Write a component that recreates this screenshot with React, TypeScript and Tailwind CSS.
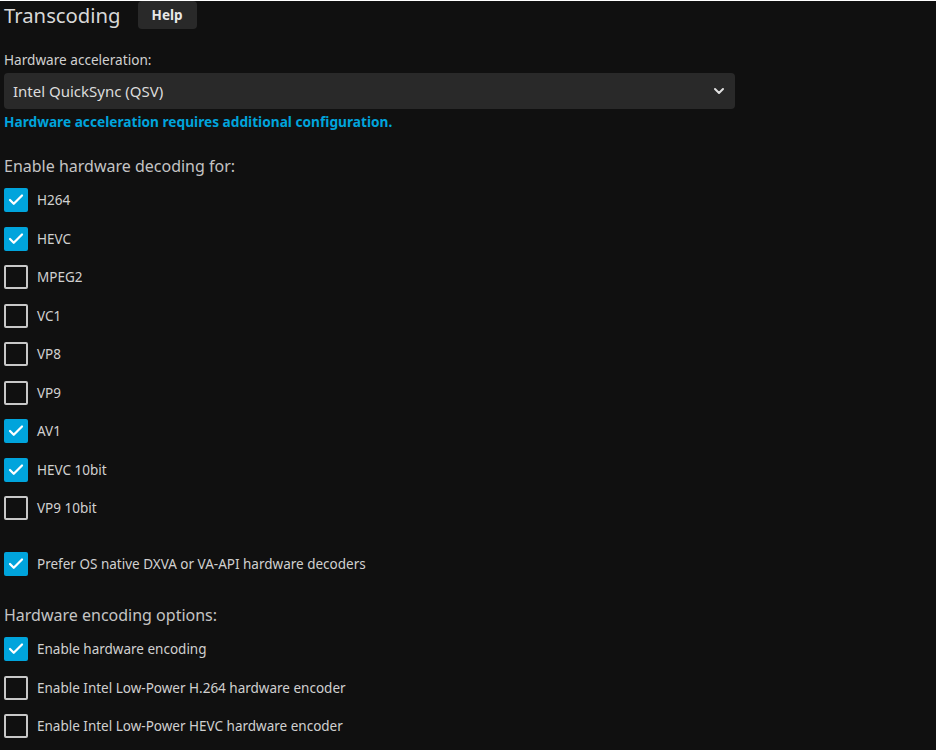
import { Check, ChevronDown } from "lucide-react";

const decoders = [
  { label: "H264", checked: true },
  { label: "HEVC", checked: true },
  { label: "MPEG2", checked: false },
  { label: "VC1", checked: false },
  { label: "VP8", checked: false },
  { label: "VP9", checked: false },
  { label: "AV1", checked: true },
  { label: "HEVC 10bit", checked: true },
  { label: "VP9 10bit", checked: false },
];

const encoders = [
  { label: "Enable hardware encoding", checked: true },
  { label: "Enable Intel Low-Power H.264 hardware encoder", checked: false },
  { label: "Enable Intel Low-Power HEVC hardware encoder", checked: false },
];

function CheckRow({ label, checked }: { label: string; checked: boolean }) {
  return (
    <label className="flex h-6 items-center gap-[9px]">
      {checked ? (
        <span className="flex h-6 w-6 items-center justify-center rounded-[2px] bg-[#00a4dc]">
          <Check className="h-[18px] w-[18px] text-white" strokeWidth={3} />
        </span>
      ) : (
        <span className="h-6 w-6 rounded-[2px] border-2 border-[#c8c8c8]" />
      )}
      <span className="text-[13.5px] leading-[18px] text-[#d0d0d0]">{label}</span>
    </label>
  );
}

export default function App() {
  return (
    <div
      className="min-h-[750px] w-[936px] bg-[#101010] pl-1 text-[#d0d0d0]"
      style={{ fontFamily: '"Noto Sans", sans-serif' }}
    >
      <div className="mt-px flex h-[28px] items-center gap-[17px]">
        <h2 className="text-[20.3px] leading-[28px] text-[#d8d8d8]">Transcoding</h2>
        <button className="h-[28px] rounded-[4px] bg-[#292929] px-[14px] text-[13.5px] font-bold text-[#e8e8e8]">
          Help
        </button>
      </div>

      <div className="mt-[22px] text-[13.6px] leading-[18px]">Hardware acceleration:</div>
      <div className="mt-1 flex h-[36px] w-[731px] items-center justify-between rounded-[4px] bg-[#292929] pl-[9px] pr-[8px]">
        <span className="text-[15px] text-[#dcdcdc]">Intel QuickSync (QSV)</span>
        <ChevronDown className="h-[16px] w-[16px] text-[#e0e0e0]" strokeWidth={3} />
      </div>
      <div className="mt-[4px] text-[13.7px] font-bold leading-[18px] text-[#00a4dc]">
        Hardware acceleration requires additional configuration.
      </div>

      <h3 className="mt-[24px] text-[16px] leading-[22px] text-[#c4c4c4]">Enable hardware decoding for:</h3>
      <div className="mt-[11px] flex flex-col gap-[14.5px]">
        {decoders.map((d) => (
          <CheckRow key={d.label} label={d.label} checked={d.checked} />
        ))}
      </div>

      <div className="mt-[32px]">
        <CheckRow label="Prefer OS native DXVA or VA-API hardware decoders" checked />
      </div>

      <h3 className="mt-[28px] text-[16px] leading-[22px] text-[#c4c4c4]">Hardware encoding options:</h3>
      <div className="mt-[11px] flex flex-col gap-[14.5px]">
        {encoders.map((d) => (
          <CheckRow key={d.label} label={d.label} checked={d.checked} />
        ))}
      </div>
    </div>
  );
}
